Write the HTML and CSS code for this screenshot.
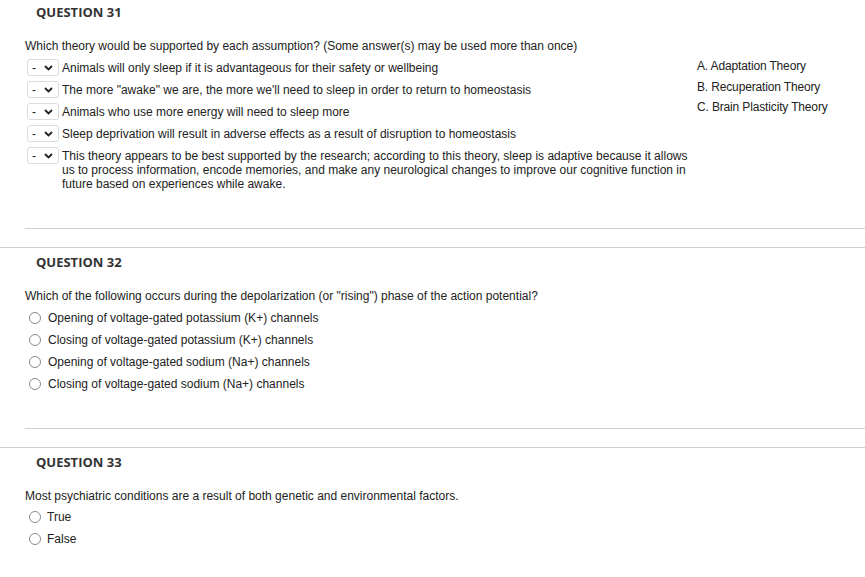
FILE: index.html
```html
<!DOCTYPE html>
<html>
<head>
<meta charset="utf-8">
<link rel="stylesheet" href="styles.css">
</head>
<body>
<section class="question q31">
  <h2 class="q-title">QUESTION 31</h2>
  <div class="q-body">
    <p class="q-text">Which theory would be supported by each assumption? (Some answer(s) may be used more than once)</p>
    <div class="match">
      <div class="match-left">
        <div class="m-row">
          <span class="dd"><span class="dd-val">-</span><svg class="chev" width="9" height="6" viewBox="0 0 9 6"><path d="M1 1 L4.5 4.5 L8 1" fill="none" stroke="#222" stroke-width="1.8"/></svg></span>
          <span class="m-text">Animals will only sleep if it is advantageous for their safety or wellbeing</span>
        </div>
        <div class="m-row">
          <span class="dd"><span class="dd-val">-</span><svg class="chev" width="9" height="6" viewBox="0 0 9 6"><path d="M1 1 L4.5 4.5 L8 1" fill="none" stroke="#222" stroke-width="1.8"/></svg></span>
          <span class="m-text">The more "awake" we are, the more we'll need to sleep in order to return to homeostasis</span>
        </div>
        <div class="m-row">
          <span class="dd"><span class="dd-val">-</span><svg class="chev" width="9" height="6" viewBox="0 0 9 6"><path d="M1 1 L4.5 4.5 L8 1" fill="none" stroke="#222" stroke-width="1.8"/></svg></span>
          <span class="m-text">Animals who use more energy will need to sleep more</span>
        </div>
        <div class="m-row">
          <span class="dd"><span class="dd-val">-</span><svg class="chev" width="9" height="6" viewBox="0 0 9 6"><path d="M1 1 L4.5 4.5 L8 1" fill="none" stroke="#222" stroke-width="1.8"/></svg></span>
          <span class="m-text">Sleep deprivation will result in adverse effects as a result of disruption to homeostasis</span>
        </div>
        <div class="m-row">
          <span class="dd"><span class="dd-val">-</span><svg class="chev" width="9" height="6" viewBox="0 0 9 6"><path d="M1 1 L4.5 4.5 L8 1" fill="none" stroke="#222" stroke-width="1.8"/></svg></span>
          <span class="m-text">This theory appears to be best supported by the research; according to this theory, sleep is adaptive because it allows us to process information, encode memories, and make any neurological changes to improve our cognitive function in future based on experiences while awake.</span>
        </div>
      </div>
      <ul class="match-right">
        <li>A. Adaptation Theory</li>
        <li>B. Recuperation Theory</li>
        <li>C. Brain Plasticity Theory</li>
      </ul>
    </div>
  </div>
</section>

<section class="question q32">
  <h2 class="q-title">QUESTION 32</h2>
  <div class="q-body">
    <p class="q-text">Which of the following occurs during the depolarization (or "rising") phase of the action potential?</p>
    <ul class="options">
      <li><span class="radio"></span>Opening of voltage-gated potassium (K+) channels</li>
      <li><span class="radio"></span>Closing of voltage-gated potassium (K+) channels</li>
      <li><span class="radio"></span>Opening of voltage-gated sodium (Na+) channels</li>
      <li><span class="radio"></span>Closing of voltage-gated sodium (Na+) channels</li>
    </ul>
  </div>
</section>

<section class="question q33">
  <h2 class="q-title">QUESTION 33</h2>
  <div class="q-body">
    <p class="q-text">Most psychiatric conditions are a result of both genetic and environmental factors.</p>
    <ul class="options tf">
      <li><span class="radio"></span>True</li>
      <li><span class="radio"></span>False</li>
    </ul>
  </div>
</section>
</body>
</html>
```

FILE: styles.css
```css
html, body {
  margin: 0;
  padding: 0;
  background: #fff;
}
body {
  font-family: "Liberation Sans", Arial, sans-serif;
  font-size: 12px;
  color: #222;
  width: 865px;
  overflow: hidden;
}
.question {
  border-top: 1px solid #d0d0d0;
}
.q31 {
  border-top: none;
}
.q-title {
  margin: 0;
  padding: 3px 0 0 36px;
  font-family: "Open Sans", sans-serif;
  font-weight: 700;
  font-size: 13px;
  line-height: 18px;
  color: #333;
}
.q32 .q-title, .q33 .q-title {
  padding-top: 5px;
}
.q-body {
  margin: 0 0 18px 25px;
  border-bottom: 1px solid #d0d0d0;
}
.q33 .q-body {
  border-bottom: none;
  margin-bottom: 0;
}
.q-text {
  margin: 17px 0 0 0;
  line-height: 16px;
}
.match {
  display: flex;
  padding-bottom: 37px;
}
.match-left {
  width: 665px;
  display: flex;
  flex-direction: column;
  gap: 5px;
  padding-top: 5px;
}
.m-row {
  display: flex;
  align-items: flex-start;
}
.dd {
  flex: none;
  width: 32px;
  height: 17px;
  margin: 0 3px 0 2px;
  border: 1px solid #dcdcdc;
  border-radius: 3px;
  display: flex;
  align-items: center;
  justify-content: space-between;
  padding: 0 5px 0 4px;
  box-sizing: border-box;
}
.dd-val {
  font-size: 12px;
  line-height: 12px;
  color: #222;
}
.chev {
  display: block;
}
.m-text {
  padding-top: 1.5px;
  line-height: 14px;
  flex: 1;
}
.match-right {
  list-style: none;
  margin: 0;
  padding: 2px 0 0 7px;
  font-size: 12px;
  letter-spacing: -0.15px;
  line-height: 20.5px;
}
.options {
  list-style: none;
  margin: 3px 0 0 0;
  padding: 0 0 33px 0;
}
.options li {
  display: flex;
  align-items: center;
  height: 22px;
}
.radio {
  flex: none;
  width: 12px;
  height: 12px;
  box-sizing: border-box;
  border: 1px solid #888;
  border-radius: 50%;
  margin: 0 7px 0 4px;
}
.tf {
  margin-top: 2px;
  padding-bottom: 0;
}
.tf li .radio {
  margin-right: 6px;
}
```
